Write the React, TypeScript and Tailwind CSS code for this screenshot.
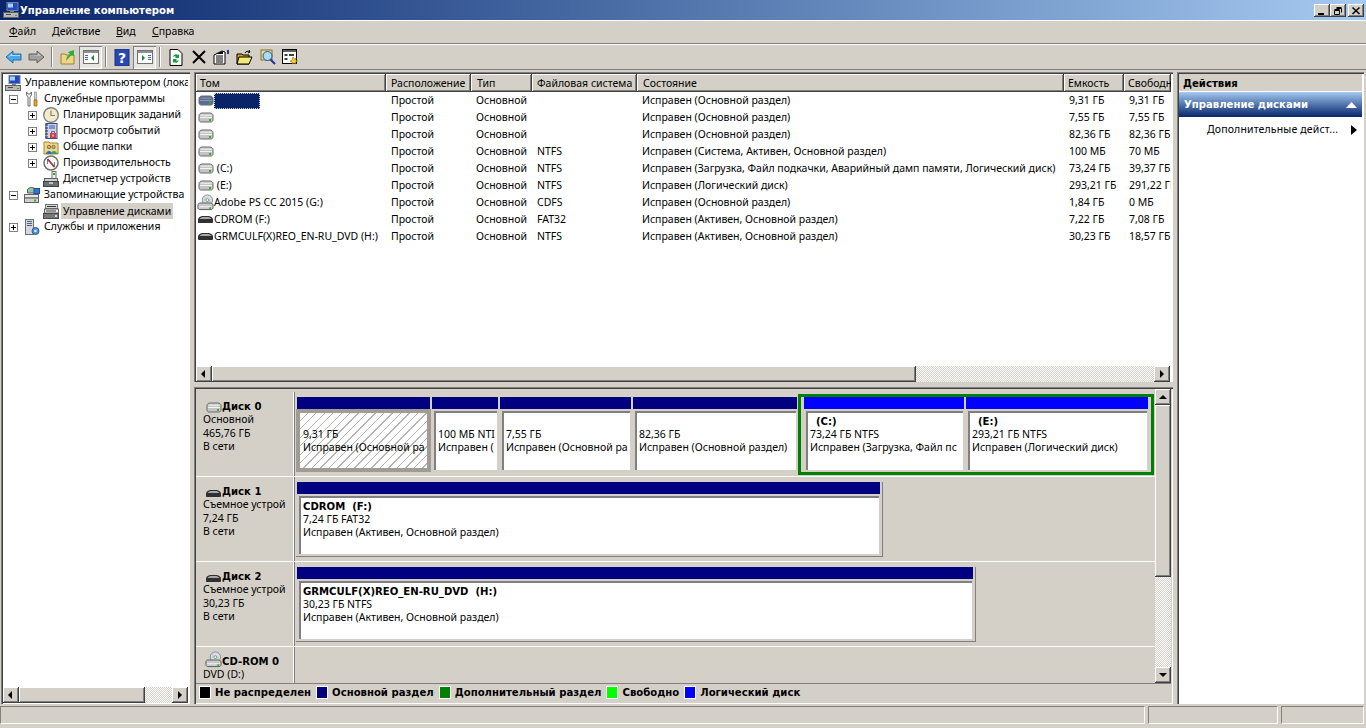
import React from "react";

const raised = "shadow-[inset_-1px_-1px_#404040,inset_1px_1px_#ffffff,inset_-2px_-2px_#808080]";
const sunken = "shadow-[inset_1px_1px_#808080,inset_2px_2px_#404040,inset_-1px_-1px_#ffffff]";
const track = "bg-[image:repeating-conic-gradient(#d4d0c8_0_25%,#ffffff_0_50%)] bg-[length:2px_2px]";
const boldFont = "font-['DejaVu_Sans',sans-serif] font-bold text-[10.100px]";

function Hdd({ active }: { active?: boolean }) {
  const top = active ? "#7c88a8" : "#e4e4e4";
  const body = active ? "#5c6c90" : "#c4c4c4";
  return (
    <svg width="16" height="11" viewBox="0 0 16 11">
      <path d="M1 3.500C1 2 2.500 1 4 1h8c1.500 0 3 1 3 2.500V8c0 1-1 2-2 2H3c-1 0-2-1-2-2z" fill={body} stroke="#6c6c6c" />
      <path d="M3 2.500h10l1 1.500H2z" fill={top} />
      <path d="M2 5.500h12" stroke={active ? "#8c98b8" : "#f4f4f4"} />
      <rect x="11" y="7" width="2" height="2" fill="#30b030" />
    </svg>
  );
}
function Usb() {
  return (
    <svg width="17" height="9" viewBox="0 0 17 9">
      <path d="M1 5c0-3 3-4 5-4h5c2 0 5 1 5 4v2c0 .5-.5 1-1 1H2c-.5 0-1-.5-1-1z" fill="#303030" />
      <path d="M3.500 3c1-1 2-1 3-1h4c1 0 2 0 3 1l1 1H2.500z" fill="#a8a8a8" />
    </svg>
  );
}
function Cd() {
  return (
    <svg width="18" height="17" viewBox="0 0 18 17">
      <circle cx="11" cy="6" r="5.500" fill="#dcdce8" stroke="#88889a" />
      <path d="M8 2l3 4-4 1zM14 9l-3-3 4-1z" fill="#b8e0b0" />
      <circle cx="11" cy="6" r="1.500" fill="#ffffff" stroke="#7090a0" />
      <path d="M1 11c0-1 1-2 2-2h11c1 0 3 1 3 2v3c0 1-1 2-2 2H3c-1 0-2-1-2-2z" fill="#c8c8c8" stroke="#585858" />
      <path d="M2 13h14" stroke="#f4f4f4" />
      <rect x="13" y="13.500" width="2" height="2" fill="#30b030" />
    </svg>
  );
}
function TreeIcon({ k }: { k: string }) {
  const s = { width: 16, height: 16, viewBox: "0 0 16 16" };
  if (k === "pc")
    return (
      <svg {...s}>
        <rect x="4" y=".5" width="11" height="8" fill="#2448c0" stroke="#7080a0" />
        <rect x="5" y="1.500" width="5" height="4" fill="#a8d0ff" />
        <rect x="7" y="9" width="4" height="2" fill="#808080" />
        <rect x=".5" y="10.500" width="15" height="5" fill="#b8b8b8" stroke="#606060" />
        <rect x="3" y="12" width="5" height="1" fill="#484848" />
        <rect x="12" y="13" width="2" height="1" fill="#30a030" />
      </svg>
    );
  if (k === "tools")
    return (
      <svg {...s}>
        <path d="M2.500 1v3l1.500 2v9h2V6l1.500-2V1L6 3H4z" fill="#f0f0f0" stroke="#505050" strokeWidth=".8" />
        <rect x="10.500" y="1" width="2" height="8" fill="#d0d0d0" stroke="#707070" strokeWidth=".5" />
        <path d="M10 9h3v6h-3z" fill="#e8a810" stroke="#886008" strokeWidth=".7" />
      </svg>
    );
  if (k === "clock")
    return (
      <svg {...s}>
        <circle cx="8" cy="8" r="7.300" fill="#f4ecc8" stroke="#808080" strokeWidth="1.400" />
        <path d="M8 3.500V8.500h4" fill="none" stroke="#808080" strokeWidth="1.200" />
      </svg>
    );
  if (k === "log")
    return (
      <svg {...s}>
        <rect x="3" y=".5" width="11" height="15" fill="#c8d4f0" stroke="#404880" />
        <path d="M2 2h3M2 5h3M2 8h3M2 11h3M2 14h3" stroke="#202850" />
        <path d="M6 3h6M6 5h6" stroke="#3858a0" />
        <path d="M7 10h6v5H7z" fill="#d04048" />
        <path d="M8.500 10V8.500h3V10" fill="none" stroke="#906040" />
        <rect x="9.500" y="11.500" width="1" height="2" fill="#fff" />
      </svg>
    );
  if (k === "share")
    return (
      <svg {...s}>
        <path d="M1 3h5l1 1h8v11H1z" fill="#f0d888" stroke="#a08838" />
        <circle cx="6" cy="8" r="1.700" fill="#d8b070" stroke="#404040" strokeWidth=".6" />
        <circle cx="10.500" cy="8" r="1.700" fill="#d8b070" stroke="#404040" strokeWidth=".6" />
        <path d="M3 15c0-4 6-4 6 0z" fill="#3868b8" />
        <path d="M8 15c0-4 6-4 6 0z" fill="#38a068" />
      </svg>
    );
  if (k === "perf")
    return (
      <svg {...s}>
        <circle cx="8" cy="8" r="7" fill="#f8f8f0" stroke="#707070" strokeWidth="1.500" />
        <path d="M4.500 4l7 8" stroke="#d82020" strokeWidth="1.800" />
        <path d="M4.500 9V4l7 8V7" fill="none" stroke="#3858a8" strokeWidth=".8" />
      </svg>
    );
  if (k === "dev")
    return (
      <svg {...s}>
        <rect x="9" y=".5" width="4" height="7" fill="#f0f0f0" stroke="#707070" />
        <rect x="10" y="2" width="2" height="2" fill="#40a040" />
        <rect x="1.500" y="7.500" width="13" height="3" fill="#d0d0d0" stroke="#606060" />
        <rect x=".5" y="10.500" width="15" height="5" fill="#687078" stroke="#404040" />
        <rect x="6" y="11" width="4" height="2" fill="#c0c0c0" />
      </svg>
    );
  if (k === "store")
    return (
      <svg {...s}>
        <path d="M3.500 3c0-1.500 2-2.500 4-2.500s4 1 4 2.500v3h-8z" fill="#90c8a0" stroke="#506070" />
        <rect x="10" y="1.500" width="5.500" height="5" fill="#2878e0" stroke="#205090" />
        <rect x=".5" y="7.500" width="14" height="3.500" fill="#e8e8e8" stroke="#606060" />
        <rect x=".5" y="11" width="14" height="4.500" fill="#d0d0d0" stroke="#606060" />
        <rect x="10" y="12.500" width="2" height="2" fill="#30b030" />
      </svg>
    );
  if (k === "disk")
    return (
      <svg {...s}>
        <rect x="2.500" y="1.500" width="12" height="4" fill="#d8d8d8" stroke="#707070" />
        <rect x="4" y="3" width="9" height="1" fill="#383838" />
        <rect x="1.500" y="6" width="14" height="4" fill="#f0f0f0" stroke="#606060" />
        <rect x="3" y="7.500" width="10" height="1" fill="#383838" />
        <rect x=".5" y="10.500" width="15" height="5" fill="#787878" stroke="#484848" />
        <rect x="12" y="12" width="2" height="2" fill="#d8d8d8" />
      </svg>
    );
  return (
    <svg {...s}>
      <rect x="1.500" y=".5" width="8" height="15" fill="#d4d8e0" stroke="#687078" />
      <path d="M3 2.500h5M3 4.500h5M3 6.500h5" stroke="#506080" />
      <circle cx="11.500" cy="12" r="3.500" fill="#5090d0" stroke="#306090" />
      <circle cx="11.500" cy="12" r="1.200" fill="#e8f0f8" />
    </svg>
  );
}
function Expander({ open }: { open?: boolean }) {
  return (
    <span className="relative inline-block w-[9px] h-[9px] border border-[#808080] bg-white shrink-0">
      <span className="absolute left-[1px] top-[3px] w-[5px] h-px bg-black" />
      {!open && <span className="absolute left-[3px] top-[1px] w-px h-[5px] bg-black" />}
    </span>
  );
}
function TreeRow({ pad, exp, open, icon, label, sel }: { pad: number; exp?: boolean; open?: boolean; icon: string; label: string; sel?: boolean }) {
  return (
    <div className="flex items-center h-4 whitespace-nowrap">
      {pad === 0 ? <span className="w-[2px] shrink-0" /> : pad === 1 ? <span className="w-[6px] shrink-0" /> : <span className="w-[25px] shrink-0" />}
      {pad > 0 && (exp ? <Expander open={open} /> : <span className="w-[9px] shrink-0" />)}
      <span className={`shrink-0 ${pad === 0 ? "w-[19px]" : "ml-[6px] w-[19px]"}`}>
        <TreeIcon k={icon} />
      </span>
      <span className={sel ? "bg-[#d4d0c8] px-[2px] -ml-[1px] h-4 leading-4" : "px-[1px]"}>{label}</span>
    </div>
  );
}
function Arrow({ dir }: { dir: "l" | "r" | "u" | "d" }) {
  const p = { l: "M7 2v8L3 6z", r: "M4 2v8l4-4z", u: "M2 8h8L6 4z", d: "M2 4h8L6 8z" }[dir];
  return (
    <svg width="12" height="12" viewBox="0 0 12 12">
      <path d={p} fill="#000" />
    </svg>
  );
}
function SBtn({ dir }: { dir: "l" | "r" | "u" | "d" }) {
  return (
    <div className={`w-4 h-4 shrink-0 bg-[#d4d0c8] flex items-center justify-center ${raised}`}>
      <Arrow dir={dir} />
    </div>
  );
}
function HScroll({ thumb, rest }: { thumb: string; rest: string }) {
  return (
    <div className="flex h-4 shrink-0">
      <SBtn dir="l" />
      <div className={`${thumb} h-4 bg-[#d4d0c8] ${raised}`} />
      <div className={`${rest} h-4 ${track}`} />
      <SBtn dir="r" />
    </div>
  );
}

const cols = "grid-cols-[190px_85px_61px_105px_427px_60px_47px]";
const headPad = ["pl-[4px]", "pl-[5px]", "pl-[6px]", "pl-[5px]", "pl-[6px]", "pl-[4px]", "pl-[4px]"];
const rows: [string, string, string, string, string, string, string, React.ReactNode][] = [
  ["", "Простой", "Основной", "", "Исправен (Основной раздел)", "9,31 ГБ", "9,31 ГБ", <Hdd active />],
  ["", "Простой", "Основной", "", "Исправен (Основной раздел)", "7,55 ГБ", "7,55 ГБ", <Hdd />],
  ["", "Простой", "Основной", "", "Исправен (Основной раздел)", "82,36 ГБ", "82,36 ГБ", <Hdd />],
  ["", "Простой", "Основной", "NTFS", "Исправен (Система, Активен, Основной раздел)", "100 МБ", "70 МБ", <Hdd />],
  [" (C:)", "Простой", "Основной", "NTFS", "Исправен (Загрузка, Файл подкачки, Аварийный дамп памяти, Логический диск)", "73,24 ГБ", "39,37 ГБ", <Hdd />],
  [" (E:)", "Простой", "Основной", "NTFS", "Исправен (Логический диск)", "293,21 ГБ", "291,22 ГБ", <Hdd />],
  ["Adobe PS CC 2015 (G:)", "Простой", "Основной", "CDFS", "Исправен (Основной раздел)", "1,84 ГБ", "0 МБ", <Cd />],
  ["CDROM (F:)", "Простой", "Основной", "FAT32", "Исправен (Активен, Основной раздел)", "7,22 ГБ", "7,08 ГБ", <Usb />],
  ["GRMCULF(X)REO_EN-RU_DVD (H:)", "Простой", "Основной", "NTFS", "Исправен (Активен, Основной раздел)", "30,23 ГБ", "18,57 ГБ", <Usb />],
];

function Part({ w, bar, title, l1, l2, hatch, indent }: { w: string; bar: string; title?: string; l1: string; l2: string; hatch?: boolean; indent?: boolean }) {
  return (
    <div className={`${w} shrink-0 flex flex-col h-full`}>
      <div className={`h-[12px] mx-[1px] shrink-0 ${bar}`} />
      <div className={`flex-1 min-h-0 ${hatch ? "border-[4px] border-[#a09c94]" : "p-[2px] pl-[3px]"}`}>
        <div
          className={`h-full overflow-hidden whitespace-pre pt-[2px] leading-[13px] ${
            hatch
              ? "pl-[3px] bg-[image:repeating-linear-gradient(135deg,#ffffff_0_5px,#b4b4b4_5px_6px)]"
              : "pl-[2px] bg-white border-t-2 border-l-2 border-[#808080]"
          }`}
        >
          <div className={`${boldFont} h-[13px] ${indent ? "pl-[6px]" : ""}`}>{title}</div>
          <div className="h-[13px]">{l1}</div>
          <div className="h-[13px]">{l2}</div>
        </div>
      </div>
    </div>
  );
}
function DiskLabel({ icon, name, lines }: { icon: React.ReactNode; name: string; lines: string[] }) {
  return (
    <div className="w-[98px] shrink-0 border-r border-white shadow-[1px_0_#808080] pl-[7px] pt-[7px] overflow-hidden whitespace-nowrap leading-[13px] h-full">
      <div className="flex items-end h-[14px]">
        <span className="w-[19px] pl-[2px] flex justify-center items-end">{icon}</span>
        <span className={boldFont}>{name}</span>
      </div>
      {lines.map((t) => (
        <div key={t} className="h-[13.500px]">{t}</div>
      ))}
    </div>
  );
}
function Legend({ c, t }: { c: string; t: string }) {
  return (
    <div className="flex items-center mr-[5px]">
      <span className={`w-3 h-[13px] border border-white ${c} mr-[4px]`} />
      <span className={boldFont}>{t}</span>
    </div>
  );
}

export default function App() {
  const tb = "w-[23px] h-[23px] flex items-center justify-center";
  const sep = <span className="w-[2px] h-[20px] border-l border-[#808080] border-r-white border-r mx-[3px]" />;
  return (
    <div
      className="w-[1366px] h-[728px] overflow-hidden bg-[#d4d0c8] text-black text-[10.500px] flex flex-col"
      style={{ fontFamily: '"Noto Sans", sans-serif' }}
    >
      {/* title */}
      <div className="h-[20px] shrink-0 flex items-center bg-gradient-to-r from-[#0a246a] to-[#a6caf0] pl-[3px] pr-[2px]">
        <span className="w-[17px]">
          <TreeIcon k="pc" />
        </span>
        <span className={`text-white ${boldFont} pt-[1px]`}>Управление компьютером</span>
        <span className="ml-auto flex pt-[1px]">
          {["min", "max"].map((k) => (
            <span key={k} className={`w-4 h-[13px] bg-[#d4d0c8] flex items-center justify-center ${raised}`}>
              {k === "min" ? (
                <span className="w-[6px] h-[2px] bg-black mt-[6px] -ml-[2px]" />
              ) : (
                <svg width="10" height="10" viewBox="0 0 10 10">
                  <path d="M3.500 2.500h5v4M3.500 1.500h5M1.500 4.500h5v4h-5zM1.500 3.500h5" fill="none" stroke="#000" />
                </svg>
              )}
            </span>
          ))}
          <span className={`w-4 h-[13px] ml-[2px] bg-[#d4d0c8] flex items-center justify-center ${raised}`}>
            <svg width="10" height="10" viewBox="0 0 10 10">
              <path d="M1.500 1.500l7 6.500M8.500 1.500l-7 6.500" fill="none" stroke="#000" strokeWidth="1.500" />
            </svg>
          </span>
        </span>
      </div>
      {/* menu */}
      <div className="h-[24px] shrink-0 border-t border-t-white border-b border-b-[#808080] flex items-center pl-[9px]">
        <span className="w-[43px]"><u>Ф</u>айл</span>
        <span className="w-[64px]"><u>Д</u>ействие</span>
        <span className="w-[36px]"><u>В</u>ид</span>
        <span><u>С</u>правка</span>
      </div>
      {/* toolbar */}
      <div className="h-[26px] shrink-0 border-t border-t-white border-b border-b-[#808080] flex items-center pl-[2px]">
        <span className={tb}>
          <svg width="17" height="14" viewBox="0 0 17 14"><path d="M1 7l7-6v3h8v6H8v3z" fill="#4aa8e8" stroke="#2070b0" /><path d="M3 7l4-3.500V5h8v1H6z" fill="#a8dcff" /></svg>
        </span>
        <span className={tb}>
          <svg width="17" height="14" viewBox="0 0 17 14"><path d="M16 7L9 1v3H1v6h8v3z" fill="#a0a0a0" stroke="#606060" /><path d="M2 5h8V3l3 3z" fill="#c8c8c8" /></svg>
        </span>
        {sep}
        <span className={tb}>
          <svg width="16" height="16" viewBox="0 0 16 16"><path d="M1 5h4l1 1h8v9H1z" fill="#f0d488" stroke="#a08030" /><path d="M6 12c0-3 2-6 4-7L8 3l6-2v6l-2-1c-2 1-4 4-6 6z" fill="#30b030" /></svg>
        </span>
        <span className={`${tb} bg-[#e8e6e0] shadow-[inset_1px_1px_#808080,inset_-1px_-1px_#ffffff]`}>
          <svg width="16" height="14" viewBox="0 0 16 14"><rect x=".5" y=".5" width="15" height="13" fill="#fff" stroke="#707070" /><rect x="1" y="1" width="14" height="2" fill="#909090" /><path d="M2 5h3v1H2zM2 7h3v1H2zM2 9h3v1H2z" fill="#3868c0" /><path d="M11 5v6L8 8z" fill="#208040" /></svg>
        </span>
        {sep}
        <span className={tb}>
          <svg width="16" height="17" viewBox="0 0 16 17"><rect x="1" y="0" width="14" height="17" fill="#2848b0" /><rect x="1" y="0" width="14" height="17" fill="none" stroke="#183080" /><text x="8" y="14" textAnchor="middle" fontSize="14" fontWeight="bold" fill="#fff" fontFamily="'DejaVu Sans', sans-serif">?</text></svg>
        </span>
        <span className={`${tb} bg-[#e8e6e0] shadow-[inset_1px_1px_#808080,inset_-1px_-1px_#ffffff]`}>
          <svg width="16" height="14" viewBox="0 0 16 14"><rect x=".5" y=".5" width="15" height="13" fill="#fff" stroke="#707070" /><rect x="1" y="1" width="14" height="2" fill="#909090" /><path d="M11 5h3v1h-3zM11 7h3v1h-3zM11 9h3v1h-3z" fill="#3868c0" /><path d="M5 5v6l3-3z" fill="#208040" /></svg>
        </span>
        {sep}
        <span className={tb}>
          <svg width="14" height="17" viewBox="0 0 14 17"><path d="M1 .5h8l4 4v12H1z" fill="#fff" stroke="#000" /><path d="M4 8a3 3 0 0 1 5-2l1-1v4H6l1-1a2 2 0 0 0-3 0zM10 11a3 3 0 0 1-5 2l-1 1v-4h4l-1 1a2 2 0 0 0 3 0z" fill="#10a040" /></svg>
        </span>
        <span className={tb}>
          <svg width="14" height="14" viewBox="0 0 14 14"><path d="M1 1l12 12M13 1L1 13" stroke="#000" strokeWidth="2" /></svg>
        </span>
        <span className={tb}>
          <svg width="17" height="16" viewBox="0 0 17 16"><path d="M1 6l8-4 3 1v12H1z" fill="#fff" stroke="#000" /><path d="M3 7h7M3 9h7M3 11h7M3 13h7" stroke="#000" /><path d="M3 5l7-3v3z" fill="#000" /><path d="M14 1h2v4h-2z" fill="#283880" /></svg>
        </span>
        <span className={tb}>
          <svg width="17" height="15" viewBox="0 0 17 15"><path d="M1 4h5l1 1h6v9H1z" fill="#c8a820" stroke="#000" /><path d="M3 7h13l-3 7H1z" fill="#f4e878" stroke="#000" /><path d="M9 3c1-2 3-2 5-1l-1-2M14 2l-2 1" fill="none" stroke="#000" /></svg>
        </span>
        <span className={tb}>
          <svg width="16" height="16" viewBox="0 0 16 16"><rect x="1" y="1" width="11" height="10" fill="#e8d8a0" stroke="#807030" /><circle cx="7.500" cy="7" r="4.500" fill="#a0e0f0" stroke="#405080" /><path d="M10.500 10.500l4.500 4.500" stroke="#2030a0" strokeWidth="2" /></svg>
        </span>
        <span className={tb}>
          <svg width="17" height="16" viewBox="0 0 17 16"><rect x=".5" y=".5" width="14" height="14" fill="#fff" stroke="#000" /><rect x="1" y="1" width="13" height="2" fill="#606060" /><path d="M2.500 5h3v2h-3zM2.500 9h3v2h-3zM7 5h5v2H7z" fill="#404040" /><path d="M11 8l1.500 2 2-1-1 2 2 1-2 1 .5 2-2-1-1.500 1-.5-2-2-1 2-1z" fill="#f0d020" stroke="#705800" strokeWidth=".5" /></svg>
        </span>
      </div>
      {/* body */}
      <div className="flex-1 min-h-0 flex gap-[4px] pt-[2px] pl-[1px] pr-[2px]">
        {/* tree */}
        <div className={`w-[189px] shrink-0 bg-white flex flex-col p-[2px] pb-[1px] ${sunken}`}>
          <div className="flex-1 min-h-0 overflow-hidden pt-[1px]">
            <TreeRow pad={0} icon="pc" label="Управление компьютером (лока" />
            <TreeRow pad={1} exp open icon="tools" label="Служебные программы" />
            <TreeRow pad={2} exp icon="clock" label="Планировщик заданий" />
            <TreeRow pad={2} exp icon="log" label="Просмотр событий" />
            <TreeRow pad={2} exp icon="share" label="Общие папки" />
            <TreeRow pad={2} exp icon="perf" label="Производительность" />
            <TreeRow pad={2} icon="dev" label="Диспетчер устройств" />
            <TreeRow pad={1} exp open icon="store" label="Запоминающие устройства" />
            <TreeRow pad={2} icon="disk" label="Управление дисками" sel />
            <TreeRow pad={1} exp icon="svc" label="Службы и приложения" />
          </div>
          <HScroll thumb="w-[126px]" rest="w-[27px]" />
        </div>
        {/* center */}
        <div className="w-[979px] shrink-0 flex flex-col">
          <div className={`h-[310px] shrink-0 bg-white flex flex-col p-[2px] pb-0 ${sunken}`}>
            <div className={`grid ${cols} h-[18px] shrink-0 bg-[#d4d0c8]`}>
              {["Том", "Расположение", "Тип", "Файловая система", "Состояние", "Емкость", "Свободн"].map((h, i) => (
                <div key={h} className={`${headPad[i]} leading-[18px] whitespace-nowrap overflow-hidden ${raised}`}>{h}</div>
              ))}
            </div>
            <div className="flex-1 min-h-0">
              {rows.map((r, i) => (
                <div key={i} className={`grid ${cols} h-[17px] items-center`}>
                  <div className="pl-[1px] flex items-center whitespace-nowrap overflow-hidden">
                    <span className="w-[17px] shrink-0 flex justify-center">{r[7]}</span>
                    {i === 0 ? (
                      <span className="w-[46px] h-[16px] bg-[#0a246a] border border-dotted border-[#d4d0c8]" />
                    ) : (
                      <span className="whitespace-pre">{r[0]}</span>
                    )}
                  </div>
                  {r.slice(1, 7).map((c, j) => (
                    <div key={j} className="pl-[5px] whitespace-nowrap overflow-hidden">{c as string}</div>
                  ))}
                </div>
              ))}
            </div>
            <HScroll thumb="w-[704px]" rest="w-[238px]" />
          </div>
          <div className="h-[5px] shrink-0" />
          <div className={`flex-1 min-h-0 flex flex-col p-[2px] ${sunken}`}>
            <div className="flex-1 min-h-0 flex">
              <div className="flex-1 min-w-0 flex flex-col overflow-hidden pt-[3px]">
                <div className="h-[85px] shrink-0 flex border-b border-white">
                  <DiskLabel icon={<Hdd />} name="Диск 0" lines={["Основной", "465,76 ГБ", "В сети"]} />
                  <div className="flex-1 min-w-0 flex pt-[5px] pb-[4px] pl-[2px]">
                    <Part w="w-[135px]" bar="bg-[#000080]" l1="9,31 ГБ" l2="Исправен (Основной ра" hatch />
                    <Part w="w-[68px]" bar="bg-[#000080]" l1="100 МБ NTI" l2="Исправен (" />
                    <Part w="w-[133px]" bar="bg-[#000080]" l1="7,55 ГБ" l2="Исправен (Основной ра" />
                    <Part w="w-[166px]" bar="bg-[#000080]" l1="82,36 ГБ" l2="Исправен (Основной раздел)" />
                    <div className="w-[356px] shrink-0 flex border-[3px] border-[#008000] h-[81px] -mt-[3px] pl-[2px]">
                      <Part w="w-[162px]" bar="bg-[#0000ff]" title="(C:)" indent l1="73,24 ГБ NTFS" l2="Исправен (Загрузка, Файл пс" />
                      <Part w="w-[184px]" bar="bg-[#0000ff]" title="(E:)" indent l1="293,21 ГБ NTFS" l2="Исправен (Логический диск)" />
                    </div>
                  </div>
                </div>
                <div className="h-[85px] shrink-0 flex border-b border-white">
                  <DiskLabel icon={<Usb />} name="Диск 1" lines={["Съемное устрой", "7,24 ГБ", "В сети"]} />
                  <div className="flex-1 min-w-0 flex pt-[5px] pb-[4px] pl-[2px]">
                    <div className="w-[587px] border-r border-b border-[#808080]">
                      <Part w="w-[585px]" bar="bg-[#000080]" title="CDROM  (F:)" l1="7,24 ГБ FAT32" l2="Исправен (Активен, Основной раздел)" />
                    </div>
                  </div>
                </div>
                <div className="h-[85px] shrink-0 flex border-b border-white">
                  <DiskLabel icon={<Usb />} name="Диск 2" lines={["Съемное устрой", "30,23 ГБ", "В сети"]} />
                  <div className="flex-1 min-w-0 flex pt-[5px] pb-[4px] pl-[2px]">
                    <div className="w-[680px] border-r border-b border-[#808080]">
                      <Part w="w-[678px]" bar="bg-[#000080]" title="GRMCULF(X)REO_EN-RU_DVD  (H:)" l1="30,23 ГБ NTFS" l2="Исправен (Активен, Основной раздел)" />
                    </div>
                  </div>
                </div>
                <div className="flex-1 min-h-0 flex">
                  <DiskLabel icon={<Cd />} name="CD-ROM 0" lines={["DVD (D:)"]} />
                </div>
              </div>
              <div className="w-4 shrink-0 flex flex-col">
                <SBtn dir="u" />
                <div className={`h-[172px] bg-[#d4d0c8] ${raised}`} />
                <div className={`flex-1 ${track}`} />
                <SBtn dir="d" />
              </div>
            </div>
            <div className="h-[19px] shrink-0 flex items-center pl-[3px] border-t border-[#808080]">
              <Legend c="bg-black" t="Не распределен" />
              <Legend c="bg-[#000080]" t="Основной раздел" />
              <Legend c="bg-[#008000]" t="Дополнительный раздел" />
              <Legend c="bg-[#00ff00]" t="Свободно" />
              <Legend c="bg-[#0000ff]" t="Логический диск" />
            </div>
          </div>
        </div>
        {/* actions */}
        <div className={`flex-1 min-w-0 bg-white flex flex-col p-[2px] ${sunken}`}>
          <div className={`h-[18px] bg-[#d4d0c8] ${boldFont} pl-[4px] pt-[1px] leading-[18px] border-b border-white shrink-0`}>Действия</div>
          <div className={`h-[25px] shrink-0 bg-gradient-to-b from-[#a6caf0] to-[#0a246a] flex items-center pl-[5px] pr-[5px] text-white ${boldFont}`}>
            Управление дисками
            <svg className="ml-auto" width="11" height="6" viewBox="0 0 11 6"><path d="M0 6h11L5.500 0z" fill="#fff" /></svg>
          </div>
          <div className="h-[25px] flex items-center pl-[28px] pr-[5px] tracking-[0.15px]">
            Дополнительные дейст...
            <svg className="ml-auto" width="6" height="10" viewBox="0 0 6 10"><path d="M0 0v10l6-5z" fill="#000" /></svg>
          </div>
        </div>
      </div>
      {/* status */}
      <div className="h-[24px] shrink-0 flex gap-[3px] pt-[2px] pb-[4px]">
        <div className="w-[1145px] border-t border-l border-t-[#808080] border-l-[#808080] border-r border-b border-white" />
        <div className="w-[130px] border-t border-l border-t-[#808080] border-l-[#808080] border-r border-b border-white" />
        <div className="w-[83px] border-t border-l border-t-[#808080] border-l-[#808080] border-r border-b border-white" />
      </div>
    </div>
  );
}
